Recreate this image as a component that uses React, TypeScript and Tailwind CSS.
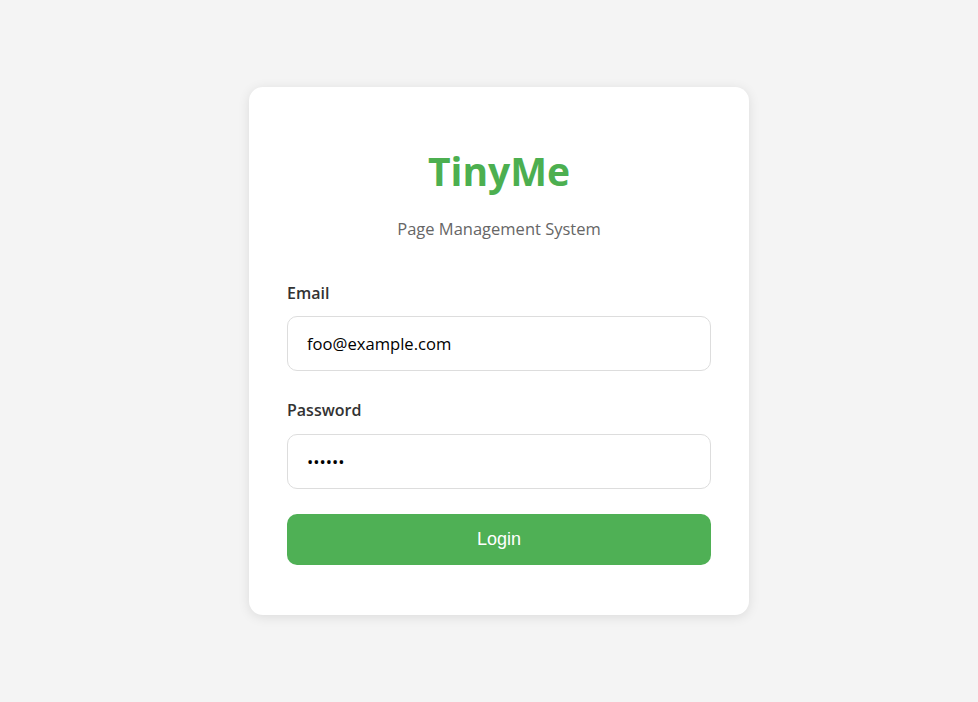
export default function App() {
  return (
    <div className="flex min-h-screen items-center justify-center bg-[#f4f4f4] pl-5 font-['Open_Sans',sans-serif]">
      <div className="flex w-[500px] flex-col rounded-[14px] bg-white px-[38px] pt-[52px] pb-[50px] shadow-[0_2px_12px_rgba(0,0,0,0.1)]">
        <h1 className="text-center text-[39px] leading-[64px] font-bold text-[#4caf50]">TinyMe</h1>
        <p className="mt-[14px] text-center text-[16.5px] leading-6 text-[#666]">Page Management System</p>

        <form className="mt-[40px] flex flex-col" onSubmit={(e) => e.preventDefault()}>
          <label className="text-[16px] leading-6 font-semibold text-[#333]">Email</label>
          <input
            type="email"
            defaultValue="foo@example.com"
            className="mt-[11px] h-[55px] rounded-[10px] border border-[#ddd] px-[19px] text-[16.6px] text-black outline-none"
          />

          <label className="mt-[27px] text-[16px] leading-6 font-semibold text-[#333]">Password</label>
          <input
            type="password"
            defaultValue="secret"
            className="mt-[12px] h-[55px] rounded-[10px] border border-[#ddd] px-[19px] text-[16.6px] text-black outline-none"
          />

          <button
            type="submit"
            className="mt-[25px] h-[51px] rounded-[10px] bg-[#4fb055] font-['Liberation_Sans',sans-serif] text-[18px] text-white"
          >
            Login
          </button>
        </form>
      </div>
    </div>
  );
}
